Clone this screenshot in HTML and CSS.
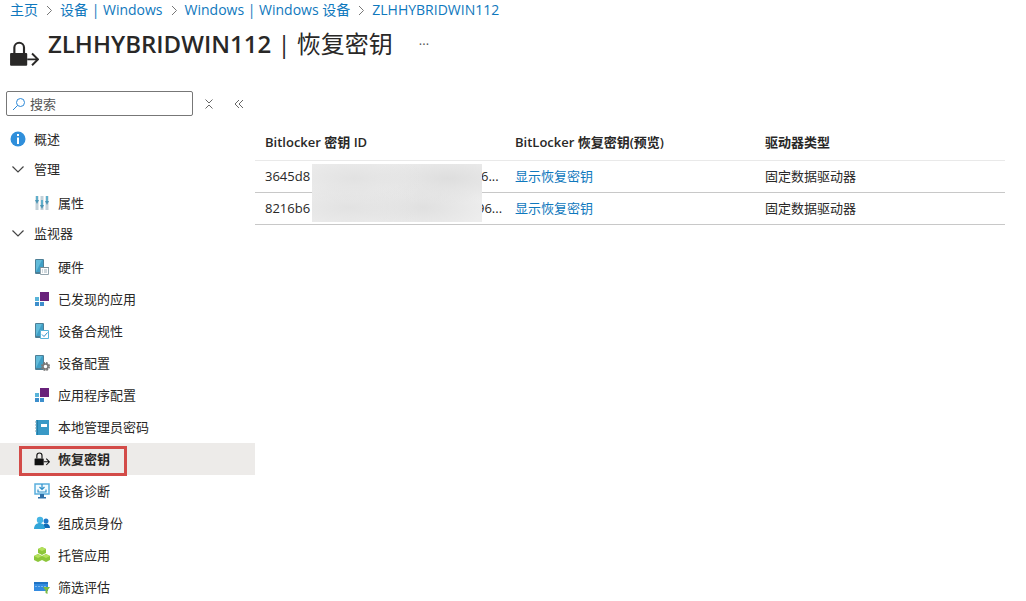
FILE: index.html
```html
<!DOCTYPE html>
<html lang="zh-CN">
<head>
  <meta charset="UTF-8">
  <meta name="viewport" content="width=device-width, initial-scale=1.0">
  <title>ZLHHYBRIDWIN112 | 恢复密钥</title>
  <link rel="stylesheet" href="styles.css">
</head>
<body>
  <!-- Shared icons -->
  <svg class="sprite" aria-hidden="true">
    <symbol id="lock" viewBox="0 0 28 24">
      <path d="M5 11V6a4.500 4.500 0 0 1 9 0v5" fill="none" stroke="currentColor" stroke-width="2"/>
      <rect x="1" y="11" width="16" height="12" rx="1" fill="currentColor"/>
      <path d="M17 17h10M21.500 11.500L27 17l-5.500 5.500" fill="none" stroke="currentColor" stroke-width="1.800"/>
    </symbol>
    <symbol id="phone" viewBox="0 0 16 16">
      <rect x="1" y="0" width="9" height="15" rx="1" fill="#4d7f96"/>
      <rect x="2" y="1" width="7" height="12" fill="#3f9fc6"/>
      <path d="M2 13V1h6z" fill="#62bbd9"/>
    </symbol>
    <symbol id="apps" viewBox="0 0 16 16">
      <rect x="6" y="1" width="9" height="9" fill="#68217a"/>
      <path d="M1 6h4v4H1z" fill="#59b4d9"/>
      <path d="M1 11h4v4H1zM6 11h4v4H6z" fill="#3d8fcc"/>
    </symbol>
    <symbol id="chevron" viewBox="0 0 12 12">
      <path d="M.5 3.500L6 9l5.500-5.500" fill="none" stroke="#444" stroke-width="1.200"/>
    </symbol>
    <symbol id="arrow" viewBox="0 0 8 12">
      <path d="M2 2l4.500 4.500L2 11" fill="none" stroke="#777" stroke-width="1"/>
    </symbol>
  </svg>

  <header>
    <nav class="breadcrumb">
      <a href="#">主页</a>
      <svg><use href="#arrow"/></svg>
      <a href="#">设备 | Windows</a>
      <svg><use href="#arrow"/></svg>
      <a href="#">Windows | Windows 设备</a>
      <svg><use href="#arrow"/></svg>
      <a href="#">ZLHHYBRIDWIN112</a>
    </nav>
    <div class="title-bar">
      <svg class="title-icon"><use href="#lock"/></svg>
      <h1><strong>ZLHHYBRIDWIN112</strong> | 恢复密钥</h1>
      <button class="more" aria-label="更多">···</button>
    </div>
  </header>

  <div class="layout">
    <aside class="sidebar">
      <div class="search-row">
        <div class="search-box">
          <svg viewBox="0 0 14 14"><circle cx="8.500" cy="5.500" r="4" fill="none" stroke="#2b88d8"/><path d="M5.500 8.500L1 13" stroke="#2b88d8"/></svg>
          <input type="text" placeholder="搜索" aria-label="搜索">
        </div>
        <button class="tool" aria-label="清除">
          <svg viewBox="0 0 10 10"><path d="M1.500 .5L5 4 8.500 .5M1.500 9.500L5 6l3.500 3.500" fill="none" stroke="#666"/></svg>
        </button>
        <button class="tool" aria-label="折叠菜单">
          <svg viewBox="0 0 10 10"><path d="M5 1L1 5l4 4M9 1L5 5l4 4" fill="none" stroke="#666"/></svg>
        </button>
      </div>

      <nav class="menu">
        <a href="#" class="item top">
          <svg viewBox="0 0 16 16"><circle cx="8" cy="8" r="7.500" fill="#2f8fdb"/><path d="M8 3v2M8 6.500V13" stroke="#fff" stroke-width="2"/></svg>
          概述
        </a>

        <button class="group"><svg><use href="#chevron"/></svg>管理</button>
        <a href="#" class="item">
          <svg viewBox="0 0 16 16">
            <path d="M3 1v14M8 1v14M13 1v14" stroke="#c2d0d8" stroke-width="3"/>
            <path d="M3 1v5M8 5v5M13 1v6" stroke="#5fafcb" stroke-width="2"/>
            <path d="M1 5h4l-2 4zM6 10h4l-2 4zM11 6h4l-2 4z" fill="#4b95b5"/>
          </svg>
          属性
        </a>

        <button class="group"><svg><use href="#chevron"/></svg>监视器</button>
        <a href="#" class="item">
          <svg viewBox="0 0 16 16">
            <use href="#phone"/>
            <path d="M6.500 8.500h8v7h-8z" fill="#fff" stroke="#93a4ad"/>
            <path d="M6 8.500h9" stroke="#7a8d97"/>
            <path d="M8 11h1M10 11h3M8 13h1M10 13h3" stroke="#9fb0ba"/>
          </svg>
          硬件
        </a>
        <a href="#" class="item"><svg><use href="#apps"/></svg>已发现的应用</a>
        <a href="#" class="item">
          <svg viewBox="0 0 16 16">
            <use href="#phone"/>
            <path d="M6.500 7.500h8v8h-8z" fill="#fff" stroke="#59b4d9"/>
            <path d="M8 11.500l2 2 3.500-4" fill="none" stroke="#2f8fc9"/>
          </svg>
          设备合规性
        </a>
        <a href="#" class="item">
          <svg viewBox="0 0 16 16">
            <use href="#phone"/>
            <circle cx="11.500" cy="11.500" r="3.500" fill="none" stroke="#7a7a7a" stroke-width="2" stroke-dasharray="1.800 .95"/>
            <circle cx="11.500" cy="11.500" r="2.500" fill="#fff" stroke="#7a7a7a" stroke-width="1.500"/>
          </svg>
          设备配置
        </a>
        <a href="#" class="item"><svg><use href="#apps"/></svg>应用程序配置</a>
        <a href="#" class="item">
          <svg viewBox="0 0 16 16">
            <path d="M2 1h13v15H2z" fill="#3999c6"/>
            <path d="M3 1h1v15H3z" fill="#237fa9"/>
            <path d="M1 3h2M1 6h2M1 9h2M1 12h2" stroke="#7a9baa"/>
            <path d="M7 5h6v3H7z" fill="#fff"/>
          </svg>
          本地管理员密码
        </a>
        <a href="#" class="item selected"><svg><use href="#lock"/></svg>恢复密钥</a>
        <a href="#" class="item">
          <svg viewBox="0 0 16 16">
            <path d="M1 1h14v10H1z" fill="#f2fbff" stroke="#5aaedd" stroke-width="1.500"/>
            <path d="M6 11h4v3h2v1.500H4V14h2z" fill="#2d6fa8"/>
            <path d="M8 1v5M5.500 4L8 6.500 10.500 4M4 6.500V9h8V6.500" fill="none" stroke="#2f8fc9" stroke-width="1.200"/>
          </svg>
          设备诊断
        </a>
        <a href="#" class="item">
          <svg viewBox="0 0 16 16">
            <circle cx="12" cy="6" r="2.500" fill="#1f78c8"/>
            <path d="M8 13c0-6 8-6 8 0z" fill="#0f69b5"/>
            <circle cx="6" cy="5" r="3.200" fill="#45b5e4"/>
            <path d="M0 14c0-8 11-8 11 0z" fill="#32a5d8"/>
          </svg>
          组成员身份
        </a>
        <a href="#" class="item">
          <svg viewBox="0 0 16 16">
            <path d="M8 0l4 2v4L8 8 4 6V2zM4 7l4 2v4l-4 2-4-2V9zM12 7l4 2v4l-4 2-4-2V9z" fill="#8cc63a"/>
            <path d="M8 0l4 2-4 2-4-2zM4 7l4 2-4 2-4-2zM12 7l4 2-4 2-4-2z" fill="#b4e05c"/>
          </svg>
          托管应用
        </a>
        <a href="#" class="item">
          <svg viewBox="0 0 16 16">
            <path d="M0 3h14v9H0z" fill="#338be0"/>
            <path d="M0 3h14v2H0z" fill="#1f73c4"/>
            <path d="M1 7.500h11" stroke="#7ab8f0" stroke-dasharray="2 1"/>
            <path d="M9 8h7l-2.500 3.500V15l-2-1v-2.500z" fill="#7dbb42"/>
          </svg>
          筛选评估
        </a>
      </nav>
    </aside>

    <main>
      <table>
        <thead>
          <tr>
            <th>Bitlocker 密钥 ID</th>
            <th>BitLocker 恢复密钥(预览)</th>
            <th>驱动器类型</th>
          </tr>
        </thead>
        <tbody>
          <tr>
            <td><div class="key"><span class="key-start">3645d8</span>6...</div></td>
            <td><a href="#">显示恢复密钥</a></td>
            <td>固定数据驱动器</td>
          </tr>
          <tr>
            <td><div class="key"><span class="key-start short">8216b6</span>96...</div></td>
            <td><a href="#">显示恢复密钥</a></td>
            <td>固定数据驱动器</td>
          </tr>
        </tbody>
      </table>
      <div class="redacted"></div>
    </main>
  </div>
</body>
</html>
```
FILE: styles.css
```css
*,
*::after {
  box-sizing: border-box;
}

body {
  margin: 0;
  background: #fff;
  color: #292827;
  font-family: "Open Sans", "Noto Sans CJK SC", sans-serif;
  font-size: 13px;
  line-height: 20px;
}

a {
  color: #0f78bd;
  text-decoration: none;
}

button {
  border: 0;
  padding: 0;
  background: none;
  color: inherit;
  font: inherit;
  cursor: pointer;
}

.sprite {
  display: none;
}

/* Header */
.breadcrumb {
  display: flex;
  align-items: center;
  gap: 7px;
  height: 20px;
  padding-left: 10px;
  font-size: 14px;
}

.breadcrumb svg {
  width: 8px;
  height: 12px;
}

.title-bar {
  display: flex;
  align-items: center;
  height: 48px;
  padding-left: 9px;
}

.title-icon {
  width: 30px;
  height: 26px;
  margin: 20px 9px 0 0;
}

h1 {
  margin: 0;
  font-size: 24px;
  font-weight: 400;
  line-height: 32px;
}

h1 strong {
  font-weight: 600;
}

.more {
  margin-left: 26px;
  color: #555;
}

.layout {
  display: flex;
  align-items: flex-start;
  padding-top: 23px;
}

/* Side menu */
.sidebar {
  flex: 0 0 255px;
}

.search-row {
  display: flex;
  align-items: center;
  gap: 10px;
  padding-left: 6px;
}

.search-box {
  display: flex;
  align-items: center;
  width: 187px;
  height: 25px;
  margin-right: -4px;
  padding: 0 5px;
  border: 1px solid #777;
  border-radius: 2px;
}

.search-box svg {
  flex: none;
  width: 14px;
  height: 14px;
}

.search-box input {
  width: 100%;
  border: 0;
  padding: 0 4px;
  outline: 0;
  font: inherit;
}

.search-box input::placeholder {
  color: #555;
  opacity: 1;
}

.tool {
  display: flex;
  justify-content: center;
  width: 20px;
}

.tool svg {
  width: 10px;
  height: 10px;
}

.menu {
  padding-top: 7px;
}

.item {
  position: relative;
  display: flex;
  align-items: center;
  gap: 8px;
  height: 32px;
  padding-left: 34px;
  color: inherit;
}

.item svg {
  width: 16px;
  height: 16px;
}

.item.top {
  padding-left: 10px;
}

.group {
  display: flex;
  align-items: center;
  gap: 10px;
  width: 100%;
  height: 28px;
  margin-bottom: 4px;
  padding-left: 12px;
}

.group svg {
  width: 12px;
  height: 12px;
}

.item.selected {
  background: #edebe9;
  font-weight: 600;
}

.item.selected svg {
  color: #111;
}

.item.selected::after {
  content: "";
  position: absolute;
  top: 3px;
  left: 19px;
  width: 108px;
  height: 30px;
  border: 3px solid #d34b48;
}

/* Key list */
main {
  position: relative;
  flex: 1;
  padding: 33px 21px 0 0;
}

table {
  width: 100%;
  border-collapse: collapse;
  table-layout: fixed;
}

th,
td {
  height: 32px;
  padding: 0 10px;
  border-bottom: 1px solid #c8c8c8;
  text-align: left;
  white-space: nowrap;
}

th {
  height: 36px;
  border-color: #e9e9e9;
  font-weight: 600;
}

.key {
  display: flex;
}

.key-start {
  flex: none;
  width: 216px;
}

.key-start.short {
  width: 212px;
}

/* Covers the middle of both key IDs */
.redacted {
  position: absolute;
  top: 73px;
  left: 57px;
  width: 170px;
  height: 58px;
  background:
    radial-gradient(ellipse at 25% 25%, #e2e2e2, transparent 40%),
    radial-gradient(ellipse at 80% 25%, #dedede, transparent 40%),
    radial-gradient(ellipse at 22% 75%, #e2e2e2, transparent 40%),
    radial-gradient(ellipse at 65% 75%, #e0e0e0, transparent 40%),
    #ededed;
}
```
